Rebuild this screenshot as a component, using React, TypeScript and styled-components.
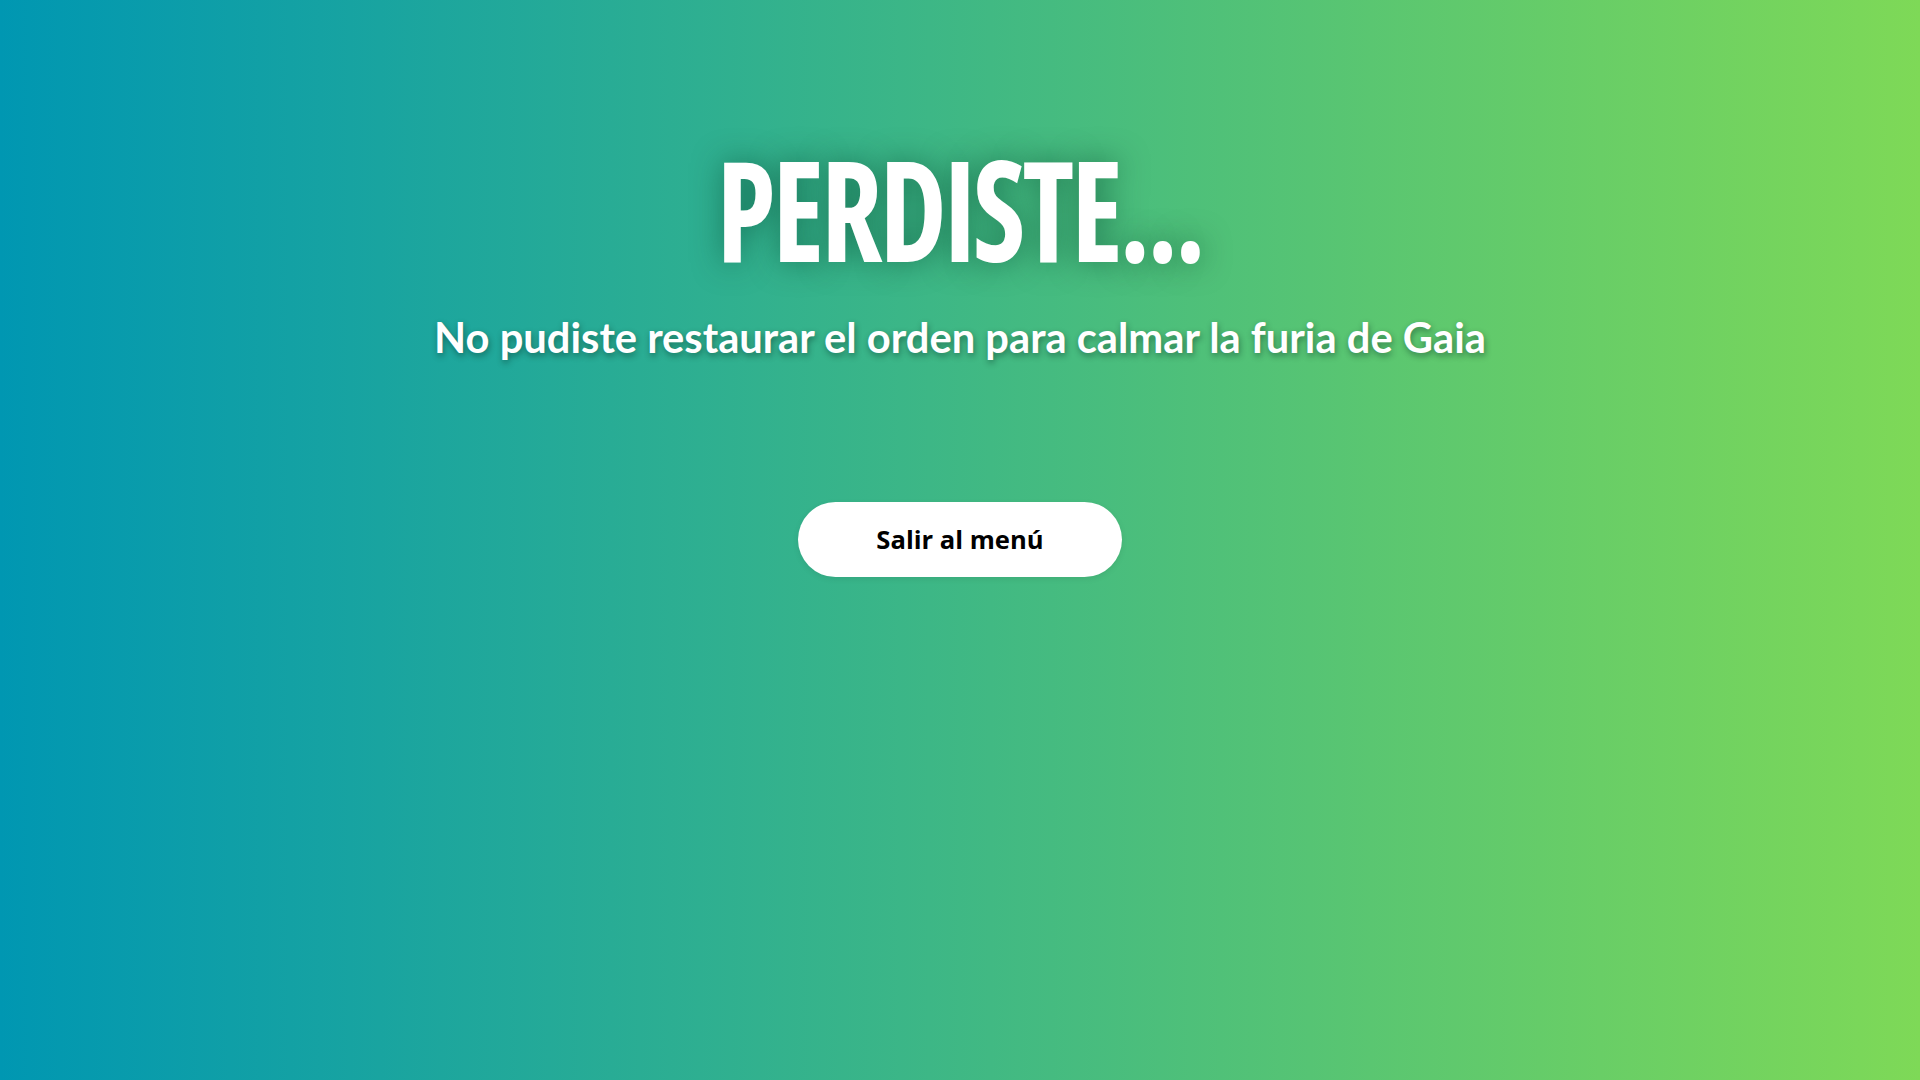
import React from "react";
import styled, { createGlobalStyle } from "styled-components";

const Global = createGlobalStyle`
  html, body { margin: 0; padding: 0; }
  body { width: 1920px; height: 1080px; overflow: hidden; }
`;

const Screen = styled.main`
  width: 1920px;
  height: 1080px;
  background: linear-gradient(90deg, #0097b2 0%, #7ed957 100%);
  display: flex;
  flex-direction: column;
  align-items: center;
  box-sizing: border-box;
  padding-top: 138px;
`;

const Title = styled.h1`
  margin: 0;
  font-family: "Open Sans", "Noto Sans", sans-serif;
  font-stretch: 75%;
  font-weight: 700;
  font-size: 140px;
  line-height: 140px;
  color: #ffffff;
  letter-spacing: -3.5px;
  transform: scaleX(0.86);
  text-shadow: 0 0 32px rgba(0, 60, 40, 0.5);
`;

const Subtitle = styled.p`
  margin: 34px 0 0;
  font-family: Lato, "Noto Sans", sans-serif;
  font-weight: 700;
  font-size: 41.7px;
  line-height: 50px;
  color: #ffffff;
  text-shadow: 1px 3px 6px rgba(0, 40, 30, 0.45);
`;

const MenuButton = styled.button`
  margin-top: 140px;
  width: 324px;
  height: 75px;
  border: none;
  border-radius: 38px;
  background: #ffffff;
  color: #000000;
  font-family: "Open Sans", "Noto Sans", sans-serif;
  font-weight: 700;
  font-size: 25.6px;
  cursor: pointer;
  box-shadow: 0 2px 6px rgba(0, 0, 0, 0.08);
`;

export default function App() {
  return (
    <>
      <Global />
      <Screen>
        <Title>PERDISTE...</Title>
        <Subtitle>No pudiste restaurar el orden para calmar la furia de Gaia</Subtitle>
        <MenuButton>Salir al menú</MenuButton>
      </Screen>
    </>
  );
}
